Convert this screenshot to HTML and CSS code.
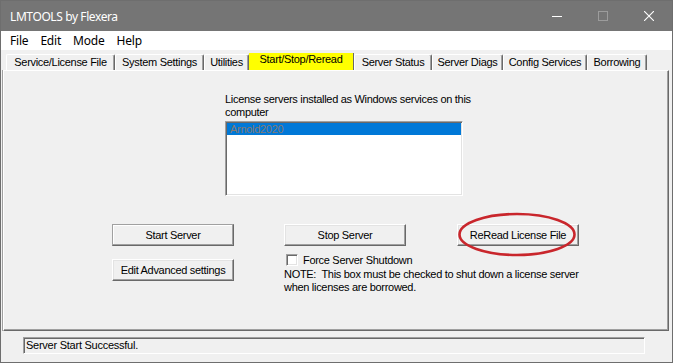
FILE: index.html
```html
<!DOCTYPE html>
<html lang="en">
<head>
    <meta charset="UTF-8">
    <title>LMTOOLS by Flexera</title>
    <link rel="stylesheet" href="styles.css">
</head>
<body>
    <div class="window">
        <div class="titlebar">
            <span class="title">LMTOOLS by Flexera</span>
            <div class="caption-buttons">
                <span class="cap-btn">
                    <svg width="10" height="10" viewBox="0 0 10 10"><path d="M0 5.5H10" stroke="#fff" stroke-width="1"/></svg>
                </span>
                <span class="cap-btn">
                    <svg width="10" height="10" viewBox="0 0 10 10"><rect x="0.5" y="0.5" width="9" height="9" fill="none" stroke="#9c9c9c" stroke-width="1"/></svg>
                </span>
                <span class="cap-btn">
                    <svg width="10" height="10" viewBox="0 0 10 10"><path d="M0 0L10 10M10 0L0 10" stroke="#fff" stroke-width="1.1"/></svg>
                </span>
            </div>
        </div>

        <ul class="menubar">
            <li>File</li>
            <li>Edit</li>
            <li>Mode</li>
            <li>Help</li>
        </ul>

        <div class="client">
            <div class="tabs">
                <div class="tab">Service/License File</div>
                <div class="tab">System Settings</div>
                <div class="tab">Utilities</div>
                <div class="tab active">Start/Stop/Reread</div>
                <div class="tab">Server Status</div>
                <div class="tab">Server Diags</div>
                <div class="tab">Config Services</div>
                <div class="tab">Borrowing</div>
            </div>

            <div class="panel">
                <div class="services">
                    <p class="services-label">License servers installed as Windows services on this computer</p>
                    <div class="listbox">
                        <div class="list-item selected">Arnold2020</div>
                    </div>
                </div>

                <div class="actions">
                    <div class="col">
                        <button class="btn btn-default">Start Server</button>
                        <button class="btn">Edit Advanced settings</button>
                    </div>
                    <div class="col">
                        <button class="btn">Stop Server</button>
                        <label class="check"><span class="check-box"></span>Force Server Shutdown</label>
                        <p class="note">NOTE:&nbsp; This box must be checked to shut down a license server when licenses are borrowed.</p>
                    </div>
                    <div class="col col-reread">
                        <button class="btn">ReRead License File</button>
                        <!-- красный овал поверх кнопки -->
                        <svg class="highlight" width="122" height="46" viewBox="0 0 122 46">
                            <ellipse cx="60" cy="22.5" rx="57.5" ry="20.5" fill="none" stroke="#c9262c" stroke-width="2.6"/>
                        </svg>
                    </div>
                </div>
            </div>

            <div class="statusbar">Server Start Successful.</div>
        </div>
    </div>
</body>
</html>
```

FILE: styles.css
```css
* {
    margin: 0;
    padding: 0;
    box-sizing: border-box;
}

body {
    width: 673px;
    height: 363px;
    overflow: hidden;
    font-family: "Liberation Sans", Arial, sans-serif;
    font-size: 11px;
    letter-spacing: -0.3px;
    color: #000;
    background-color: #f0f0f0;
}

.window {
    width: 673px;
    height: 363px;
    border: 1px solid #6e6e6e;
    display: flex;
    flex-direction: column;
}

/* Заголовок окна */
.titlebar {
    display: flex;
    align-items: center;
    height: 30px;
    background-color: #757575;
    color: #fff;
    font-family: "Noto Sans", sans-serif;
    font-size: 12px;
    letter-spacing: -0.4px;
}

.title {
    padding-left: 9px;
}

.caption-buttons {
    margin-left: auto;
    display: flex;
    height: 100%;
}

.cap-btn {
    width: 46px;
    display: flex;
    align-items: center;
    justify-content: center;
}

.cap-btn svg {
    display: block;
}

/* Меню */
.menubar {
    display: flex;
    height: 19px;
    line-height: 19px;
    padding-left: 3px;
    background-color: #fff;
    list-style: none;
    font-family: "Noto Sans", sans-serif;
    font-size: 12px;
    letter-spacing: -0.2px;
}

.menubar li {
    padding: 0 6px;
}

.client {
    flex: 1;
    display: flex;
    flex-direction: column;
    background-color: #f0f0f0;
}

/* Вкладки */
.tabs {
    display: flex;
    align-items: flex-end;
    height: 20px;
    padding-left: 5px;
}

.tab {
    height: 16px;
    line-height: 14px;
    text-align: center;
    white-space: nowrap;
    border-top: 1px solid #fff;
    border-left: 1px solid #fff;
    border-right: 1px solid #696969;
    border-radius: 2px 2px 0 0;
    box-shadow: inset -1px 0 0 #a0a0a0;
}

.tab:nth-child(1) { width: 109px; }
.tab:nth-child(2) { width: 89px; }
.tab:nth-child(3) { width: 45px; }
.tab:nth-child(4) { width: 105px; }
.tab:nth-child(5) { width: 78px; }
.tab:nth-child(6) { width: 71px; }
.tab:nth-child(7) { width: 84px; }
.tab:nth-child(8) { width: 60px; }

.tab.active {
    height: 17px;
    line-height: 12px;
    background-color: #ffff00;
    border-top: none;
    border-left: none;
    border-radius: 0;
    box-shadow: none;
}

.panel {
    height: 261px;
    margin: 0 3px 0 2px;
    border-top: 1px solid #fff;
    border-left: 1px solid #fff;
    border-right: 1px solid #696969;
    border-bottom: 1px solid #696969;
    box-shadow: inset -1px -1px 0 #a0a0a0, -1px 0 0 #a0a0a0;
}

/* Список служб */
.services {
    margin: 22px 0 0 221px;
    width: 250px;
}

.services-label {
    line-height: 13px;
}

.listbox {
    margin-top: 2px;
    width: 238px;
    height: 75px;
    background-color: #fff;
    border-top: 1px solid #a0a0a0;
    border-left: 1px solid #a0a0a0;
    border-right: 1px solid #fff;
    border-bottom: 1px solid #fff;
    box-shadow: inset 1px 1px 0 #696969, inset -1px -1px 0 #e3e3e3;
    padding: 1px 1px 0 1px;
}

.list-item {
    height: 12px;
    line-height: 12px;
    padding-left: 3px;
}

.list-item.selected {
    background-color: #0078d7;
    color: #857a72;
}

/* Кнопки */
.actions {
    margin-top: 28px;
    padding-left: 108px;
    display: grid;
    grid-template-columns: 122px 122px 122px;
    column-gap: 50px;
}

.actions .col:nth-child(3) {
    margin-left: 1px;
}

.col {
    display: flex;
    flex-direction: column;
    align-items: flex-start;
}

.btn {
    width: 122px;
    height: 22px;
    font-family: inherit;
    font-size: 11px;
    letter-spacing: -0.3px;
    color: #000;
    background-color: #f0f0f0;
    border-top: 1px solid #fff;
    border-left: 1px solid #fff;
    border-right: 1px solid #696969;
    border-bottom: 1px solid #696969;
    box-shadow: inset -1px -1px 0 #a0a0a0, inset 1px 1px 0 #e3e3e3;
}

.col .btn + .btn {
    margin-top: 13px;
}

.btn-default {
    border-top-color: #a0a0a0;
    border-left-color: #a0a0a0;
    box-shadow: inset -1px -1px 0 #a0a0a0, inset 1px 1px 0 #fff;
}

.check {
    display: flex;
    align-items: center;
    height: 12px;
    margin-top: 8px;
    padding-left: 2px;
    line-height: 12px;
    white-space: nowrap;
}

.check-box {
    flex: none;
    width: 12px;
    height: 12px;
    margin-right: 5px;
    background-color: #fff;
    border-top: 1px solid #a0a0a0;
    border-left: 1px solid #a0a0a0;
    border-right: 1px solid #fff;
    border-bottom: 1px solid #fff;
    box-shadow: inset 1px 1px 0 #696969, inset -1px -1px 0 #e3e3e3;
}

.note {
    width: 310px;
    margin-top: 2px;
    line-height: 13px;
}

.col-reread {
    position: relative;
}

.highlight {
    position: absolute;
    left: 0;
    top: -12px;
    pointer-events: none;
}

/* Строка состояния */
.statusbar {
    margin: 6px 0 0 22px;
    width: 622px;
    height: 17px;
    line-height: 15px;
    padding-left: 2px;
    letter-spacing: -0.25px;
    border-top: 1px solid #a0a0a0;
    border-left: 1px solid #a0a0a0;
    border-right: 1px solid #fff;
    border-bottom: 1px solid #fff;
    box-shadow: inset 1px 1px 0 #696969;
}
```
